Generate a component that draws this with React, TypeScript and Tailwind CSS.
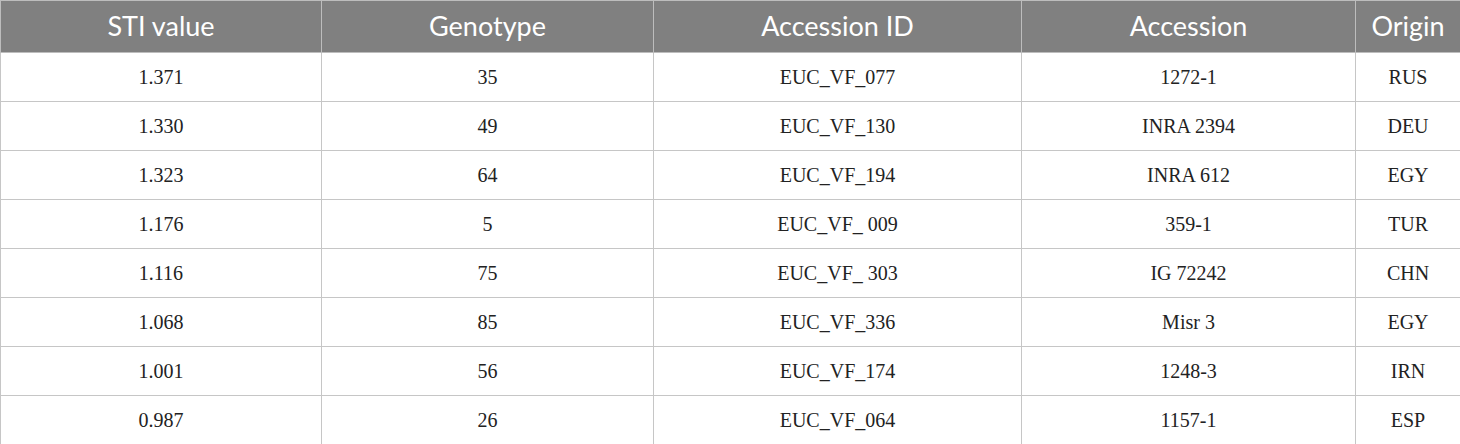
import React from "react";

const rows = [
  ["1.371", "35", "EUC_VF_077", "1272-1", "RUS"],
  ["1.330", "49", "EUC_VF_130", "INRA 2394", "DEU"],
  ["1.323", "64", "EUC_VF_194", "INRA 612", "EGY"],
  ["1.176", "5", "EUC_VF_ 009", "359-1", "TUR"],
  ["1.116", "75", "EUC_VF_ 303", "IG 72242", "CHN"],
  ["1.068", "85", "EUC_VF_336", "Misr 3", "EGY"],
  ["1.001", "56", "EUC_VF_174", "1248-3", "IRN"],
  ["0.987", "26", "EUC_VF_064", "1157-1", "ESP"],
];

const headers = ["STI value", "Genotype", "Accession ID", "Accession", "Origin"];
const widths = ["w-[321px]", "w-[332px]", "w-[368px]", "w-[334px]", "w-[105px]"];

export default function App() {
  return (
    <div className="w-[1460px] h-[444px] bg-white">
      <table className="w-[1460px] table-fixed border-collapse">
        <colgroup>
          {widths.map((w, i) => (
            <col key={i} className={w} />
          ))}
        </colgroup>
        <thead>
          <tr className="h-[52px] bg-[#808080]">
            {headers.map((h) => (
              <th
                key={h}
                className="border border-[#bdbdbd] text-center align-middle font-normal text-white text-[27px] leading-none p-0 pb-[3px] font-['Lato','Noto_Sans',sans-serif]"
              >
                {h}
              </th>
            ))}
          </tr>
        </thead>
        <tbody>
          {rows.map((r, i) => (
            <tr key={i} className="h-[49px]">
              {r.map((c, j) => (
                <td
                  key={j}
                  className="border border-[#c6c6c6] text-center align-middle text-[20px] leading-none text-[#222] p-0 font-['Liberation_Serif','Times_New_Roman',serif]"
                >
                  {c}
                </td>
              ))}
            </tr>
          ))}
        </tbody>
      </table>
    </div>
  );
}
